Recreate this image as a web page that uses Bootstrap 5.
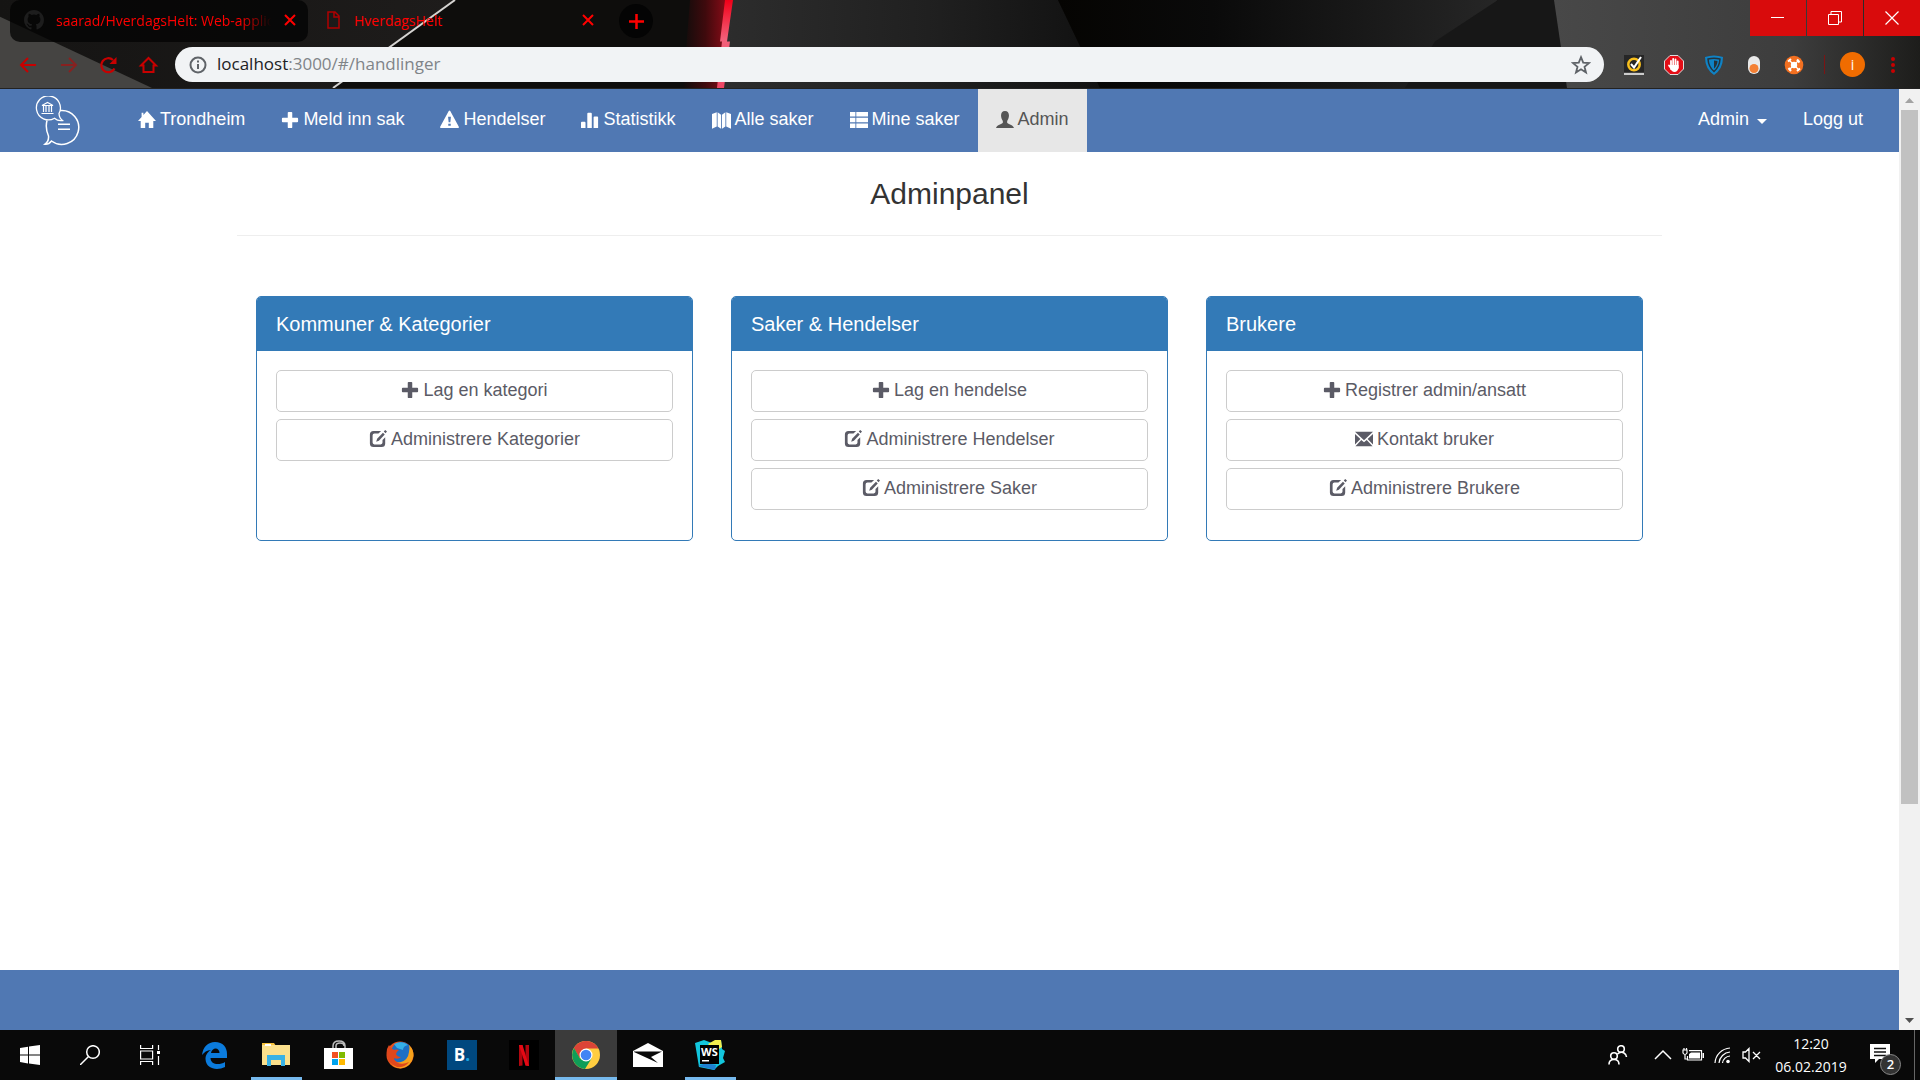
<!DOCTYPE html>
<html lang="no">
<head>
<meta charset="utf-8">
<meta name="viewport" content="width=device-width, initial-scale=1">
<title>HverdagsHelt</title>
<link href="https://cdn.jsdelivr.net/npm/bootstrap@5.3.0/dist/css/bootstrap.min.css" rel="stylesheet">
<style>
  body { font-family: "Liberation Sans", Arial, sans-serif; font-size: 18px; line-height: 25px; color: #333; overflow: hidden; }
  a, button { text-decoration: none; }
  svg { flex: none; display: block; }
  .icon-btn { background: none; border: 0; padding: 0; color: inherit; display: flex; align-items: center; justify-content: center; }

  /* Browser window frame */
  .chrome-top { height: 89px; background: #0d0c0b; color: #c80000; font-family: "Open Sans", "Noto Sans", sans-serif; border-bottom: 1px solid #222; }
  .theme-art { width: 100%; height: 100%; z-index: 0; }
  .tab-strip { height: 42px; padding-left: 10px; }
  .browser-tab { width: 298px; height: 42px; padding: 0 12px 2px 14px; color: #f00; font-size: 14px; border-radius: 10px; }
  .browser-tab:hover { color: #f00; }
  .tab-idle { background: rgba(3, 3, 3, .75); }
  .tab-name { flex: 1; overflow: hidden; white-space: nowrap; }
  .tab-idle .tab-name { -webkit-mask-image: linear-gradient(90deg, #000 84%, transparent 98%); mask-image: linear-gradient(90deg, #000 84%, transparent 98%); }
  .new-tab { width: 34px; height: 34px; border-radius: 50%; background: #040404; color: #f00; margin: 4px 0 0 13px; }
  .win-controls { gap: 1px; }
  .win-controls .icon-btn { width: 56px; height: 36px; background: #d90b0c; color: #fff; }
  .tool-row { height: 45px; padding: 0 18px; }
  .nav-tools { gap: 16px; width: 157px; }
  .omnibox { height: 35px; border-radius: 18px; background: #f1f3f5; padding: 0 13px 0 12px; color: #5f6368; margin-right: 20px; }
  .omnibox .address { flex: 1; font-size: 17px; color: #808488; padding: 0 0 2px 8px; }
  .omnibox .address b { font-weight: 400; color: #202124; }
  .ext-tools { gap: 20px; }
  .avatar { width: 25px; height: 25px; border-radius: 50%; background: #f06c00; color: #fff; font-size: 14px; line-height: 25px; margin: 0 -1px 0 -5px; }
  .ext-line { width: 1px; height: 19px; background: #7c1414; }

  /* Application */
  .app-nav { min-height: 63px; background: #5078b3; padding: 0 18px 0 35px; }
  .app-nav .nav-link { color: #fff; height: 63px; padding: 0 18px 2px; gap: 4px; display: flex; align-items: center; }
  .app-nav .nav-link.active { color: #555; background: #e7e7e7; }
  .app-brand { width: 85px; }
  .app-nav .nav-link.dropdown-toggle::after { margin: 3px 0 0 4px; border-top: 5px solid; border-left: 5px solid transparent; border-right: 5px solid transparent; border-bottom: 0; }
  .admin-wrap { width: 100%; max-width: 1425px; margin: 0 auto; }
  .admin-wrap h1 { font-size: 30px; line-height: 33px; margin: 25px 0; color: #333; }
  .admin-wrap hr { margin: 0 0 60px; border-top: 1px solid #eee; opacity: 1; }
  .admin-wrap .row { --bs-gutter-x: 38px; margin: 0; }
  .panel-card { min-height: 245px; border: 1px solid #337ab7; border-radius: 5px; }
  .panel-card .card-header { background: #337ab7; border: 0; border-radius: 4px 4px 0 0; color: #fff; padding: 16px 19px; }
  .panel-card h2 { font-size: 20px; line-height: 22px; margin: 0; }
  .panel-card .card-body { padding: 19px; display: flex; flex-direction: column; gap: 7px; }
  .btn-plain { --bs-btn-color: #5b5b66; --bs-btn-bg: #fff; --bs-btn-border-color: #ccc; --bs-btn-font-size: 18px; --bs-btn-line-height: 25px; height: 42px; border-radius: 5px; padding: 0 0 2px; display: flex; align-items: center; justify-content: center; gap: 4px; }
  .app-footer { height: 60px; background: #5078b3; }
  .scroll-rail { width: 21px; background: #f1f1f1; }
  .scroll-thumb { width: 17px; flex: 0 1 694px; background: #c1c1c1; }
  .rail-end { height: 21px; width: 21px; }

  /* Taskbar */
  .taskbar { height: 50px; background: #090909; color: #fff; font-family: "Open Sans", "Noto Sans", sans-serif; }
  .sys-btn { width: 60px; height: 50px; }
  .task-btn { width: 62px; height: 50px; position: relative; }
  .task-apps { padding-left: 3px; }
  .task-btn.running::after { content: ""; position: absolute; left: 6px; right: 5px; bottom: 0; height: 3px; background: #76b9ed; }
  .task-btn.current { background: #3b3b3b; }
  .task-btn.current::after { left: 0; right: 0; }
  .app-tile { width: 30px; height: 30px; font: 700 17px/30px "Open Sans", sans-serif; text-align: center; }
  .tile-b { background: #00487f; }
  .tile-b i { font-style: normal; color: #1ba3e0; }
  .tray { gap: 10px; margin-right: 2px; }
  .clock { width: 94px; font-size: 14px; line-height: 23px; text-align: center; }
  .note-btn { width: 56px; height: 50px; padding: 0 12px 2px 0; position: relative; }
  .note-count { position: absolute; left: 22px; top: 24px; width: 21px; height: 21px; border-radius: 50%; background: #333; border: 1px solid #888; font-size: 13px; line-height: 19px; font-weight: 600; text-align: center; }
  .peek { width: 6px; height: 50px; border-left: 1px solid #666; }
</style>
<script src="https://cdn.jsdelivr.net/npm/bootstrap@5.3.0/dist/js/bootstrap.bundle.min.js"></script>
</head>
<body class="d-flex flex-column vh-100">

<!-- Shared glyphs -->
<svg width="0" height="0" class="position-absolute" aria-hidden="true">
  <symbol id="g-home" viewBox="0 0 20 20"><path d="M10 0 20 11h-3v8h-5v-6H8v6H3v-8H0L4 6.600V2h2v2.400z"/></symbol>
  <symbol id="g-plus" viewBox="0 0 20 20"><path d="M8.500 1h3q1 0 1 1v5.500H18q1 0 1 1v3q0 1-1 1h-5.500V18q0 1-1 1h-3q-1 0-1-1v-5.500H2q-1 0-1-1v-3q0-1 1-1h5.500V2q0-1 1-1z"/></symbol>
  <symbol id="g-warn" viewBox="0 0 20 20"><path fill-rule="evenodd" d="M9.200 1q.8-1.200 1.600 0l9 16.500q.6 1.500-.8 1.500H1q-1.400 0-.8-1.500zM8.500 7l.6 6h1.800l.6-6zm.2 7.500v2.200h2.600v-2.200z"/></symbol>
  <symbol id="g-stats" viewBox="0 0 20 20"><path d="M1 12h3q1 0 1 1v6H0v-6q0-1 1-1zM8 2h3q1 0 1 1v16H7V3q0-1 1-1zM15 6h3q1 0 1 1v12h-5V7q0-1 1-1z"/></symbol>
  <symbol id="g-map" viewBox="0 0 22 20"><path d="M0 3 5.500 1v16.500L0 20zM6.500 1l4 3v16l-4-2.500zM11.500 4l4-3v16.500l-4 2.500zM16.500 1 22 3v17l-5.500-2.500z"/></symbol>
  <symbol id="g-list" viewBox="0 0 20 20"><path d="M0 1h6v5H0zM7 1h13v5H7zM0 7.500h6v5H0zM7 7.500h13v5H7zM0 14h6v5H0zM7 14h13v5H7z"/></symbol>
  <symbol id="g-user" viewBox="0 0 20 20"><path d="M10 0c3 0 4.400 2 4.400 5 0 2.500-.9 4.500-2 6v2c1 2 6.600 2 7.600 6H0c1-4 6.600-4 7.600-6v-2c-1.100-1.500-2-3.500-2-6C5.600 2 7 0 10 0z"/></symbol>
  <symbol id="g-edit" viewBox="0 0 20 20"><path d="M5 1h8.500l-3 3H6Q4 4 4 6v8q0 2 2 2h7q2 0 2-2v-3l3-3v7q0 4-4 4H5q-4 0-4-4V5q0-4 4-4zM15.500 3l2 2-6.500 7-3 1 1-3.300zM18 0l2 1.800-1.600 1.800-2-2z"/></symbol>
  <symbol id="g-mail" viewBox="0 0 20 20"><path d="M0 2h20l-10 9.500zM0 4.500 6 10l-6 6zM20 4.500 14 10l6 6zM7 11l3 2.700 3-2.700 6.500 7H.5z"/></symbol>
  <symbol id="g-x" viewBox="0 0 12 12"><path d="m1 1 10 10M11 1 1 11" fill="none" stroke="currentColor" stroke-width="2"/></symbol>
</svg>

<header class="chrome-top position-relative flex-shrink-0">
  <svg class="theme-art position-absolute top-0 start-0" viewBox="0 0 1920 89" preserveAspectRatio="none" aria-hidden="true">
    <defs>
      <linearGradient id="glow"><stop offset="0" stop-color="#0f0c0b"/><stop offset=".5" stop-color="#3f0a0d"/><stop offset="1" stop-color="#8e0c18"/></linearGradient>
      <linearGradient id="slab"><stop offset="0" stop-color="#2d2d2d"/><stop offset=".55" stop-color="#202020"/><stop offset="1" stop-color="#111"/></linearGradient>
      <linearGradient id="mid"><stop offset="0" stop-color="#050402"/><stop offset=".35" stop-color="#0a0a0a"/><stop offset="1" stop-color="#262626"/></linearGradient>
      <linearGradient id="east"><stop offset="0" stop-color="#484848"/><stop offset=".65" stop-color="#3d3d3d"/><stop offset="1" stop-color="#1d1d1b"/></linearGradient>
      <linearGradient id="west"><stop offset="0" stop-color="#151413"/><stop offset="1" stop-color="#1e1c1b"/></linearGradient>
      <linearGradient id="neon" x2="0" y2="1"><stop offset="0" stop-color="#f00018"/><stop offset=".45" stop-color="#f2607a"/><stop offset="1" stop-color="#ee4563"/></linearGradient>
    </defs>
    <path fill="url(#west)" d="M0 0h455L333 89H0z"/>
    <path fill="#454442" d="M0 17 152 89H0z"/>
    <path fill="#0e0d0c" d="M455 0h270v89H333z"/>
    <path stroke="#d6d4d2" stroke-width="2" d="M455 0 333 89"/>
    <path fill="url(#glow)" d="M690 0h38l-7 89h-38z"/>
    <path fill="url(#slab)" d="M732 0h326l42 89H719z"/>
    <path fill="url(#neon)" d="M725 0h8l-6 42h-7zM722 42h8l-6 47h-7z"/>
    <path fill="url(#mid)" d="M1058 0h440l-92 89h-306z"/>
    <path fill="#171717" d="M1498 0h60l12 89h-165l30-47z"/>
    <path fill="url(#east)" d="M1554 0h366v89h-353z"/>
  </svg>

  <div class="position-relative d-flex tab-strip">
    <a href="#" class="browser-tab tab-idle d-flex align-items-center">
      <svg width="20" height="20" viewBox="0 0 16 16" fill="#1d1d1d"><path d="M8 0C3.600 0 0 3.600 0 8c0 3.500 2.300 6.500 5.500 7.600.4.100.5-.2.500-.4v-1.500c-2 .4-2.500-.9-2.700-1-.1-.3-.5-1-.8-1.200-.3-.2-.7-.5 0-.5s1.100.6 1.200.8c.7 1.200 1.900.9 2.300.7.100-.5.300-.9.500-1.100-1.800-.2-3.600-.9-3.600-4 0-.9.300-1.600.8-2.100-.1-.3-.4-1.100.1-2.200 0 0 .7-.2 2.200.8a7.500 7.500 0 0 1 4 0c1.500-1 2.200-.8 2.200-.8.500 1.100.2 1.900.1 2.200.5.500.8 1.200.8 2.100 0 3.100-1.900 3.800-3.700 4 .3.200.6.700.6 1.500v2.200c0 .2.100.5.500.4A8 8 0 0 0 16 8c0-4.400-3.600-8-8-8z"/></svg>
      <span class="tab-name ms-2 ps-1">saarad/HverdagsHelt: Web-applic</span>
      <svg width="12" height="12" class="ms-2"><use href="#g-x"/></svg>
    </a>
    <a href="#" class="browser-tab d-flex align-items-center">
      <svg width="20" height="18" viewBox="0 0 20 18" fill="none" stroke="#b00000" stroke-width="1.500"><path d="M6 1h7l4 4v12H6zM12 1v5h5"/></svg>
      <span class="tab-name ms-2 ps-1">HverdagsHelt</span>
      <svg width="12" height="12"><use href="#g-x"/></svg>
    </a>
    <button type="button" class="icon-btn new-tab" aria-label="Ny fane"><svg width="15" height="15" viewBox="0 0 15 15" stroke="currentColor" stroke-width="2.500"><path d="M7.500 0v15M0 7.500h15"/></svg></button>
    <div class="d-flex ms-auto win-controls">
      <button type="button" class="icon-btn" aria-label="Minimer"><svg width="14" height="14" stroke="#fff"><path d="M0 6.500h13"/></svg></button>
      <button type="button" class="icon-btn" aria-label="Gjenopprett"><svg width="14" height="14" fill="none" stroke="#fff"><path d="M.5 3.500h10v10H.5zM3 3V.5h10.500V11H11"/></svg></button>
      <button type="button" class="icon-btn" aria-label="Lukk"><svg width="14" height="14" stroke="#fff" stroke-width="1.200"><path d="m.5.5 13 13M13.500.5l-13 13"/></svg></button>
    </div>
  </div>

  <div class="position-relative d-flex align-items-center tool-row">
    <div class="d-flex nav-tools">
      <button type="button" class="icon-btn" aria-label="Tilbake"><svg width="24" height="20" viewBox="0 0 24 20" fill="none" stroke="currentColor" stroke-width="2"><path d="M18 10H3M10 3l-7 7 7 7"/></svg></button>
      <button type="button" class="icon-btn opacity-50" aria-label="Frem"><svg width="24" height="20" viewBox="0 0 24 20" fill="none" stroke="currentColor" stroke-width="2"><path d="M3 10h15M11 3l7 7-7 7"/></svg></button>
      <button type="button" class="icon-btn" aria-label="Last inn"><svg width="24" height="20" viewBox="0 0 24 20" fill="none" stroke="currentColor" stroke-width="2.200"><path d="M16.500 13.500A7 7 0 1 1 15 5"/><path d="M18.500 2v7h-7z" fill="currentColor" stroke="none"/></svg></button>
      <button type="button" class="icon-btn" aria-label="Hjem"><svg width="24" height="20" viewBox="0 0 24 20" fill="none" stroke="currentColor" stroke-width="2"><path d="M3 10.500 10.500 3l7.500 7.500h-2.500V17h-10v-6.500z"/></svg></button>
    </div>
    <div class="omnibox d-flex align-items-center flex-grow-1">
      <svg width="22" height="18" viewBox="0 0 22 18" fill="none" stroke="currentColor" stroke-width="2"><circle cx="11" cy="9" r="7.500"/><path d="M11 8v5M11 4.500v2"/></svg>
      <div class="address"><b>localhost</b>:3000/#/handlinger</div>
      <button type="button" class="icon-btn" aria-label="Bokmerk"><svg width="20" height="20" viewBox="0 0 20 20" fill="none" stroke="currentColor" stroke-width="1.800"><path d="m10 2.200 2.200 5.500 5.800.4-4.500 3.700 1.500 5.700-5-3.200-5 3.200 1.500-5.700L2 8.100l5.800-.4z"/></svg></button>
    </div>
    <div class="d-flex align-items-center ext-tools">
      <svg width="20" height="20"><path fill="#262626" d="M0 0h20v17H0z"/><path fill="#ccc" d="M0 18h20v2H0z"/><circle cx="10" cy="9.500" r="5.700" fill="none" stroke="#f9c01d" stroke-width="2.500"/><path d="m7 9 3 3.500L17 2" fill="none" stroke="#fff" stroke-width="2"/></svg>
      <svg width="20" height="20"><path fill="#e30e17" stroke="#ddd" d="M6 .5h8L19.500 6v8L14 19.500H6L.5 14V6z"/><path d="M7 14V6M9.200 12V4M11.500 12V4.500M13.700 13V6.500M5 10.500l3 4" stroke="#fff" stroke-width="1.800" stroke-linecap="round"/><path d="M6.500 10h8v3q-1 4-4 4t-4-4z" fill="#fff"/></svg>
      <svg width="20" height="20"><path fill="#0f83c6" d="M1 2q9-3 18 0 0 12-9 18Q1 14 1 2z"/><path fill="none" stroke="#26323a" stroke-width="1.500" d="M4 4q6-1.500 12 0-.5 8-6 12.500Q4.500 12 4 4z"/><path fill="#26323a" d="M10 5.500q2 0 3.500.4-.2 4.500-3.500 7.600z"/></svg>
      <svg width="20" height="20"><rect x="4" y="1" width="12" height="18" rx="6" fill="#e9e9e9"/><circle cx="10" cy="13.500" r="4.500" fill="#f48034"/></svg>
      <svg width="20" height="20"><circle cx="10" cy="10" r="9.300" fill="#f37021"/><circle cx="10" cy="10" r="3.200" fill="#fff"/><path d="m5 5 10 10M15 5 5 15" stroke="#fff" stroke-width="1.200"/><path d="M4 6.500 7 4M13 4.500l2.500 3M4.500 13 7 16M13 16l3-2.500" stroke="#fff" stroke-width="2"/></svg>
      <span class="ext-line"></span>
      <button type="button" class="icon-btn avatar">i</button>
      <button type="button" class="icon-btn" aria-label="Meny"><svg width="18" height="18" fill="#c80000"><circle cx="9" cy="3" r="2"/><circle cx="9" cy="9" r="2"/><circle cx="9" cy="15" r="2"/></svg></button>
    </div>
  </div>
</header>

<div class="d-flex flex-grow-1">
  <div class="d-flex flex-column flex-grow-1 bg-white">
    <nav class="app-nav d-flex align-items-center" aria-label="Hovedmeny">
      <a href="#" class="app-brand" aria-label="HverdagsHelt">
        <svg width="48" height="50" viewBox="0 0 48 50" fill="none" stroke="#fff" stroke-width="1.500">
          <path d="M25 14.500a17 17 0 1 1-8.500 30.500q-2.500 3.500-6.500 3.200 4-3 3.500-8.200Q10 32 12 24.500"/>
          <path d="M19.500 22.200A12 12 0 1 1 24 17.500q.2 4.500 3.500 7-4.500.8-8-2.300z" stroke-width="1.300"/>
          <path d="M7 9.500 12.500 6.500 18 9.500zM8.500 10v6M11 10v6M14 10v6M16.500 10v6M6.500 17.500h12" stroke-width="1.200"/>
          <path d="M23 28.200h12M23 33.200h12"/>
        </svg>
      </a>
      <div class="nav flex-nowrap">
        <a href="#" class="nav-link"><svg width="18" height="18" fill="currentColor"><use href="#g-home"/></svg>Trondheim</a>
        <a href="#" class="nav-link"><svg width="18" height="18" fill="currentColor"><use href="#g-plus"/></svg>Meld inn sak</a>
        <a href="#" class="nav-link"><svg width="19" height="19" fill="currentColor"><use href="#g-warn"/></svg>Hendelser</a>
        <a href="#" class="nav-link"><svg width="18" height="18" fill="currentColor"><use href="#g-stats"/></svg>Statistikk</a>
        <a href="#" class="nav-link"><svg width="19" height="18" fill="currentColor"><use href="#g-map"/></svg>Alle saker</a>
        <a href="#" class="nav-link"><svg width="18" height="18" fill="currentColor"><use href="#g-list"/></svg>Mine saker</a>
        <a href="#" class="nav-link active" aria-current="page"><svg width="18" height="18" fill="currentColor"><use href="#g-user"/></svg>Admin</a>
      </div>
      <div class="nav flex-nowrap ms-auto">
        <a href="#" class="nav-link dropdown-toggle" role="button" data-bs-toggle="dropdown" aria-expanded="false">Admin</a>
        <a href="#" class="nav-link">Logg ut</a>
      </div>
    </nav>

    <main class="flex-grow-1">
      <div class="admin-wrap">
        <h1 class="text-center fw-normal">Adminpanel</h1>
        <hr>
        <div class="row">
          <section class="col-4">
            <div class="card panel-card">
              <div class="card-header"><h2 class="fw-normal">Kommuner &amp; Kategorier</h2></div>
              <div class="card-body">
                <button type="button" class="btn btn-plain"><svg width="18" height="18" fill="currentColor"><use href="#g-plus"/></svg>Lag en kategori</button>
                <button type="button" class="btn btn-plain"><svg width="18" height="18" fill="currentColor"><use href="#g-edit"/></svg>Administrere Kategorier</button>
              </div>
            </div>
          </section>
          <section class="col-4">
            <div class="card panel-card">
              <div class="card-header"><h2 class="fw-normal">Saker &amp; Hendelser</h2></div>
              <div class="card-body">
                <button type="button" class="btn btn-plain"><svg width="18" height="18" fill="currentColor"><use href="#g-plus"/></svg>Lag en hendelse</button>
                <button type="button" class="btn btn-plain"><svg width="18" height="18" fill="currentColor"><use href="#g-edit"/></svg>Administrere Hendelser</button>
                <button type="button" class="btn btn-plain"><svg width="18" height="18" fill="currentColor"><use href="#g-edit"/></svg>Administrere Saker</button>
              </div>
            </div>
          </section>
          <section class="col-4">
            <div class="card panel-card">
              <div class="card-header"><h2 class="fw-normal">Brukere</h2></div>
              <div class="card-body">
                <button type="button" class="btn btn-plain"><svg width="18" height="18" fill="currentColor"><use href="#g-plus"/></svg>Registrer admin/ansatt</button>
                <button type="button" class="btn btn-plain"><svg width="18" height="18" fill="currentColor"><use href="#g-mail"/></svg>Kontakt bruker</button>
                <button type="button" class="btn btn-plain"><svg width="18" height="18" fill="currentColor"><use href="#g-edit"/></svg>Administrere Brukere</button>
              </div>
            </div>
          </section>
        </div>
      </div>
    </main>
    <footer class="app-footer"></footer>
  </div>
  <div class="scroll-rail d-flex flex-column align-items-center flex-shrink-0">
    <svg class="rail-end" viewBox="0 0 21 21"><path fill="#a3a3a3" d="m6 14 4.500-5 4.500 5z"/></svg>
    <div class="scroll-thumb"></div>
    <svg class="rail-end mt-auto" viewBox="0 0 21 21"><path fill="#505050" d="m6 9 4.500 5L15 9z"/></svg>
  </div>
</div>

<footer class="taskbar d-flex flex-shrink-0" aria-label="Oppgavelinje">
  <button type="button" class="icon-btn sys-btn" aria-label="Start"><svg width="20" height="20" fill="#fff"><path d="m0 3 8-1.200V9.500H0zM9 1.600 20 0v9.500H9zM0 10.500h8v8L0 17zM9 10.500h11V20L9 18.500z"/></svg></button>
  <button type="button" class="icon-btn sys-btn" aria-label="Søk"><svg width="20" height="20" fill="none" stroke="#fff" stroke-width="1.500"><circle cx="13" cy="7" r="6.300"/><path d="M8.500 11.500 0 20"/></svg></button>
  <button type="button" class="icon-btn sys-btn" aria-label="Oppgavevisning"><svg width="20" height="20" fill="none" stroke="#fff" stroke-width="1.200"><path d="M.6 0v3.500h12V0M.6 6h12v8H.6zM.6 20v-3.500h12V20M18.500 0v5M18.500 11v9"/><path d="M17 6h3v3h-3z" fill="#fff" stroke="none"/></svg></button>
  <div class="d-flex task-apps">
    <button type="button" class="icon-btn task-btn" aria-label="Edge"><svg width="25" height="27" viewBox="0 0 25 27"><path fill="#0b7bdc" d="M0 13C1 5 6 0 13 0c8 0 12 5.500 12 12v4H8.500c.2 7 9 7.500 14.500 4v5c-8 4-19 2-19.500-8C3.400 12 7 9 9 8 5 8 2 10.500 0 13zm9-2h8.500C17.500 5 10 5 9 11z"/></svg></button>
    <button type="button" class="icon-btn task-btn running" aria-label="Filutforsker"><svg width="28" height="24" viewBox="0 0 28 24"><path fill="#f7c23c" d="M0 0h12l2 3H0z"/><path fill="#fbe08c" d="M0 2h28v20H0z"/><path fill="#fff" d="M3 1h6v2H3z"/><path fill="#39b2e5" d="M5 23V12h18v11h-4v-6H9v6z"/></svg></button>
    <button type="button" class="icon-btn task-btn" aria-label="Butikk"><svg width="29" height="30" viewBox="0 0 29 30"><path d="M9 9V6q0-5 6-5t6 5v3M12 9V6q0-3 4-3t4 3" fill="none" stroke="#bbb" stroke-width="1.500"/><path fill="#fff" d="M0 8h29v21H0z"/><path fill="#f25022" d="M8 12h6v6H8z"/><path fill="#7fba00" d="M15 12h6v6h-6z"/><path fill="#00a4ef" d="M8 19h6v6H8z"/><path fill="#ffb900" d="M15 19h6v6h-6z"/></svg></button>
    <button type="button" class="icon-btn task-btn" aria-label="Firefox"><svg width="28" height="28" viewBox="0 0 28 28"><circle cx="14" cy="14" r="13.500" fill="#e8521c"/><circle cx="15.500" cy="11.500" r="10.500" fill="#1d6fc4"/><path fill="#35b0e8" d="M8 3q8-4 14 1-5 1-5 5l-6-2z"/><path fill="#f7a11b" d="M23 4q5 5 4.500 11-2 11-13 12.500Q5 26 3 19q6 4 12 2 7-2 8-10 1-4 0-7z"/><path fill="#e0471c" d="M1 8q-2 14 10 18 8 1 12-5-6 3-11 1-4-2-4-5 4 2 7-1-4 0-5-3 1-3 3-4-3-1-5 0L5 7 3 4z"/></svg></button>
    <button type="button" class="icon-btn task-btn text-white" aria-label="Booking"><span class="app-tile tile-b">B<i>.</i></span></button>
    <button type="button" class="icon-btn task-btn" aria-label="Netflix"><svg width="30" height="30"><path d="M0 0h30v30H0z"/><path fill="#b1060f" d="M10 5h3.500v20.500L10 26zM16.500 5H20v21l-3.500-.5z"/><path fill="#e50914" d="M10 5h3.500L20 26l-3.500-.5z"/></svg></button>
    <button type="button" class="icon-btn task-btn running current" aria-label="Chrome"><svg width="28" height="28" viewBox="0 0 28 28"><circle cx="14" cy="14" r="14" fill="#ffcd40"/><path fill="#db4437" d="M2 7a14 14 0 0 1 24.200 0H14L8 17z"/><path fill="#db4437" d="M14 7.500h12.500L25.900 7A14 14 0 0 0 2 7l5 9z"/><path fill="#0f9d58" d="M2 7a14 14 0 0 0 11 21l6.500-10.500H8z"/><circle cx="14" cy="14" r="6.500" fill="#fff"/><circle cx="14" cy="14" r="5.300" fill="#4285f4"/></svg></button>
    <button type="button" class="icon-btn task-btn" aria-label="E-post"><svg width="30" height="24" viewBox="0 0 30 24"><path fill="#fff" d="M0 8 15 0l15 8v16H0z"/><path fill="#090909" d="M1 8.500h28L18 14l7 6L1 9z"/></svg></button>
    <button type="button" class="icon-btn task-btn running" aria-label="WebStorm"><svg width="30" height="30" viewBox="0 0 30 30"><path fill="#12c6dd" d="M0 3 9 0l8 3 4-3h5l1 9 3 2-2 7 2 4-7 4-4 4-15-3z"/><path fill="#f3ee4e" d="M13 4 20 0h6l1 7-6 4z"/><path fill="#1f7fd0" d="m3 26 8-3 10 2-1 5z"/><path d="M5 5h19v19H5z"/><text x="6" y="16" fill="#fff" font-family="Open Sans, sans-serif" font-weight="700" font-size="11">WS</text><path fill="#fff" d="M7 20h7v1.500H7z"/></svg></button>
  </div>
  <div class="d-flex align-items-center ms-auto">
    <div class="tray d-flex align-items-center">
      <button type="button" class="icon-btn me-3" aria-label="Personer"><svg width="20" height="20" fill="none" stroke="#fff" stroke-width="1.600"><circle cx="13" cy="4" r="3.300"/><circle cx="6" cy="11" r="3.300"/><path d="M1 19.500q0-5 5-5t5 5M9.500 9q3-3 6.500-1 2.500 1.500 2.500 4"/></svg></button>
      <button type="button" class="icon-btn" aria-label="Vis skjulte ikoner"><svg width="18" height="12" fill="none" stroke="#fff" stroke-width="1.500"><path d="m1 10 8-8 8 8"/></svg></button>
      <svg width="22" height="16" fill="none" stroke="#fff" stroke-width="1.200"><path d="M1 3h4v3q-2 3-4 0zM2 3V1M4.500 3V1M3 7.500V12h2M7 3.700h12.500V13H5.500V9"/><path fill="#fff" stroke="none" d="M7 7 9 5.500h9v6H7zM20.500 6H22v5h-1.500z"/></svg>
      <svg width="18" height="18" fill="none" stroke="#fff" stroke-width="1.200"><path d="M1 17A16 16 0 0 1 16 2M5 17A12 12 0 0 1 16 6M8.500 17A8 8 0 0 1 16 10"/><circle cx="14" cy="15.500" r="1.800" fill="#fff" stroke="none"/></svg>
      <svg width="20" height="16" fill="none" stroke="#fff" stroke-width="1.300"><path d="M1 5h2.500L7 1.500v13L3.500 11H1zM11 5l7 7M18 5l-7 7"/></svg>
    </div>
    <div class="clock">12:20<br>06.02.2019</div>
    <button type="button" class="icon-btn note-btn" aria-label="Varsler"><svg width="20" height="20"><path fill="#fff" d="M0 0h20v15H9l-4 4v-4H0z"/><path stroke="#111" stroke-width="1.300" d="M4 4.500h12M4 8h12M4 11.500h12"/></svg><span class="note-count">2</span></button>
    <div class="peek"></div>
  </div>
</footer>
</body>
</html>
